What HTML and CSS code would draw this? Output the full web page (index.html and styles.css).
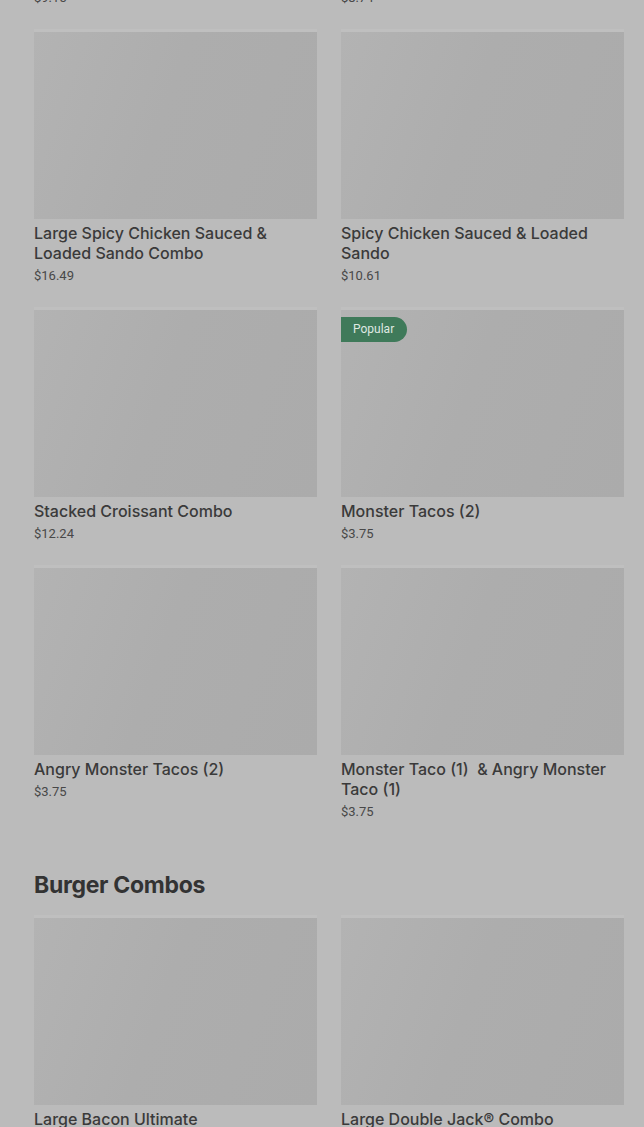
FILE: index.html
```html
<!DOCTYPE html>
<html lang="en">
<head>
    <meta charset="UTF-8">
    <meta name="viewport" content="width=device-width, initial-scale=1.0">
    <title>Menu</title>
    <link rel="stylesheet" href="styles.css">
</head>
<body>
    <div class="menu">
        <div class="itemGrid topTail">
            <div class="item"><p class="price">$9.15</p></div>
            <div class="item"><p class="price">$8.74</p></div>

            <div class="item">
                <div class="photo"></div>
                <p class="name">Large Spicy Chicken Sauced &amp; Loaded Sando Combo</p>
                <p class="price">$16.49</p>
            </div>
            <div class="item">
                <div class="photo"></div>
                <p class="name">Spicy Chicken Sauced &amp; Loaded Sando</p>
                <p class="price">$10.61</p>
            </div>

            <div class="item">
                <div class="photo"></div>
                <p class="name">Stacked Croissant Combo</p>
                <p class="price">$12.24</p>
            </div>
            <div class="item">
                <div class="photo">
                    <span class="badge">Popular</span>
                </div>
                <p class="name">Monster Tacos (2)</p>
                <p class="price">$3.75</p>
            </div>

            <div class="item">
                <div class="photo"></div>
                <p class="name">Angry Monster Tacos (2)</p>
                <p class="price">$3.75</p>
            </div>
            <div class="item">
                <div class="photo"></div>
                <p class="name">Monster Taco (1)&nbsp; &amp; Angry Monster Taco (1)</p>
                <p class="price">$3.75</p>
            </div>
        </div>

        <h2 class="sectionTitle">Burger Combos</h2>

        <div class="itemGrid">
            <div class="item">
                <div class="photo"></div>
                <p class="name">Large Bacon Ultimate<br>Cheeseburger&reg; Combo</p>
                <p class="price">$14.29</p>
            </div>
            <div class="item">
                <div class="photo"></div>
                <p class="name">Large Double Jack&reg; Combo</p>
                <p class="price">$13.49</p>
            </div>
        </div>
    </div>
</body>
</html>
```

FILE: styles.css
```css
*{
    margin: 0px;
    box-sizing: border-box;
}
body{
    background-color: #bbbbbb;
    font-family: Inter, "Liberation Sans", sans-serif;
    color: #383838;
    overflow: hidden;
}
.menu{
    padding-left: 34px;
}
.itemGrid{
    display: grid;
    grid-template-columns: 283px 283px;
    column-gap: 24px;
    row-gap: 25px;
}
.topTail{
    margin-top: -11px;
}
.item{
    display: flex;
    flex-direction: column;
}
.photo{
    position: relative;
    height: 187px;
    background: linear-gradient(110deg, #b3b3b3 0%, #adadad 45%, #ababab 100%);
    box-shadow: 0px -3px 0px #bfbfbf;
    margin-bottom: 4px;
}
.badge{
    position: absolute;
    top: 7px;
    left: 0px;
    height: 25px;
    padding: 0px 13px 0px 12px;
    line-height: 25px;
    font-family: Roboto, sans-serif;
    font-size: 12px;
    color: #dfe9e2;
    background-color: #3f7a5a;
    border-radius: 0px 13px 13px 0px;
}
.name{
    font-size: 16px;
    line-height: 20px;
    font-weight: 500;
    color: #3a3a3a;
}
.price{
    margin-top: 4px;
    font-family: Roboto, sans-serif;
    font-size: 13px;
    line-height: 18px;
    color: #484848;
}
.topTail .item:nth-child(-n+2) .price{
    margin-top: 0px;
}
.sectionTitle{
    margin-top: 48px;
    margin-bottom: 17px;
    font-family: Inter, sans-serif;
    font-size: 23px;
    line-height: 32px;
    font-weight: 700;
    letter-spacing: -0.3px;
    color: #333333;
}
```
